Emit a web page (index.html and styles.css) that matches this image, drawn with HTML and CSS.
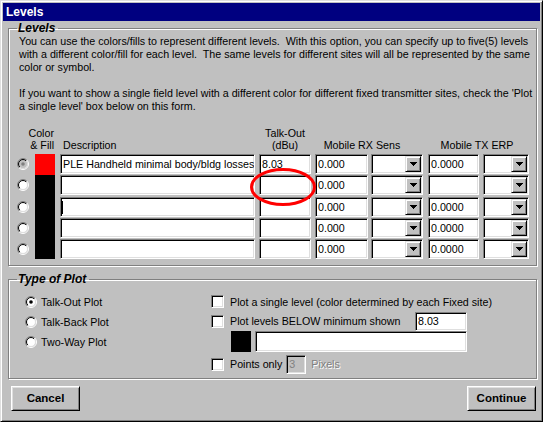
FILE: index.html
```html
<!DOCTYPE html>
<html>
<head>
<meta charset="utf-8">
<title>Levels</title>
<link rel="stylesheet" href="styles.css">
</head>
<body>
<div class="window">
  <svg class="defs" width="0" height="0" aria-hidden="true">
    <defs>
      <linearGradient id="rOuter" x1="0" y1="0" x2="1" y2="1">
        <stop offset="0.5" stop-color="#808080"/><stop offset="0.5" stop-color="#ffffff"/>
      </linearGradient>
      <linearGradient id="rInner" x1="0" y1="0" x2="1" y2="1">
        <stop offset="0.5" stop-color="#000000"/><stop offset="0.5" stop-color="#dfdfdf"/>
      </linearGradient>
    </defs>
  </svg>
  <div class="titlebar">Levels</div>
  <div class="body">
    <fieldset class="group group-levels">
      <legend>Levels</legend>
      <p class="intro">You can use the colors/fills to represent different levels.&nbsp; With this option, you can specify up to five(5) levels<br>with a different color/fill for each level.&nbsp; The same levels for different sites will all be represented by the same<br>color or symbol.</p>
      <p class="intro">If you want to show a single field level with a different color for different fixed transmitter sites, check the 'Plot<br>a single level' box below on this form.</p>
      <div class="grid">
        <div class="hdr hdr-color">Color<br>&amp; Fill</div>
        <div class="hdr hdr-desc">Description</div>
        <div class="hdr hdr-talk">Talk-Out<br>(dBu)</div>
        <div class="hdr hdr-rx">Mobile RX Sens</div>
        <div class="hdr hdr-tx">Mobile TX ERP</div>

        <svg class="radio" width="12" height="12" viewBox="0 0 12 12"><circle cx="6" cy="6" r="5.5" fill="none" stroke="url(#rOuter)"/><circle cx="6" cy="6" r="4.5" fill="#c0c0c0" stroke="url(#rInner)"/><circle cx="6" cy="6" r="1.8" fill="#808080"/></svg>
        <div class="swatch red"></div>
        <div class="field w-desc">PLE Handheld minimal body/bldg losses</div>
        <div class="field w-talk">8.03</div>
        <div class="field w-rx">0.000</div>
        <div class="field combo w-rxdd"><span class="dbtn"><svg width="7" height="4" viewBox="0 0 7 4"><path d="M0 0h7v1h-1v1h-1v1h-1v1h-1v-1h-1v-1h-1v-1h-1z"/></svg></span></div>
        <div class="field w-tx">0.0000</div>
        <div class="field combo w-txdd"><span class="dbtn"><svg width="7" height="4" viewBox="0 0 7 4"><path d="M0 0h7v1h-1v1h-1v1h-1v1h-1v-1h-1v-1h-1v-1h-1z"/></svg></span></div>

        <svg class="radio" width="12" height="12" viewBox="0 0 12 12"><circle cx="6" cy="6" r="5.5" fill="none" stroke="url(#rOuter)"/><circle cx="6" cy="6" r="4.5" fill="#fff" stroke="url(#rInner)"/></svg>
        <div class="swatch"></div>
        <div class="field w-desc"></div>
        <div class="field w-talk"></div>
        <div class="field w-rx">0.000</div>
        <div class="field combo w-rxdd"><span class="dbtn"><svg width="7" height="4" viewBox="0 0 7 4"><path d="M0 0h7v1h-1v1h-1v1h-1v1h-1v-1h-1v-1h-1v-1h-1z"/></svg></span></div>
        <div class="field w-tx"></div>
        <div class="field combo w-txdd"><span class="dbtn"><svg width="7" height="4" viewBox="0 0 7 4"><path d="M0 0h7v1h-1v1h-1v1h-1v1h-1v-1h-1v-1h-1v-1h-1z"/></svg></span></div>

        <svg class="radio" width="12" height="12" viewBox="0 0 12 12"><circle cx="6" cy="6" r="5.5" fill="none" stroke="url(#rOuter)"/><circle cx="6" cy="6" r="4.5" fill="#fff" stroke="url(#rInner)"/></svg>
        <div class="swatch"></div>
        <div class="field w-desc"><span class="caret"></span></div>
        <div class="field w-talk"></div>
        <div class="field w-rx">0.000</div>
        <div class="field combo w-rxdd"><span class="dbtn"><svg width="7" height="4" viewBox="0 0 7 4"><path d="M0 0h7v1h-1v1h-1v1h-1v1h-1v-1h-1v-1h-1v-1h-1z"/></svg></span></div>
        <div class="field w-tx">0.0000</div>
        <div class="field combo w-txdd"><span class="dbtn"><svg width="7" height="4" viewBox="0 0 7 4"><path d="M0 0h7v1h-1v1h-1v1h-1v1h-1v-1h-1v-1h-1v-1h-1z"/></svg></span></div>

        <svg class="radio" width="12" height="12" viewBox="0 0 12 12"><circle cx="6" cy="6" r="5.5" fill="none" stroke="url(#rOuter)"/><circle cx="6" cy="6" r="4.5" fill="#fff" stroke="url(#rInner)"/></svg>
        <div class="swatch"></div>
        <div class="field w-desc"></div>
        <div class="field w-talk"></div>
        <div class="field w-rx">0.000</div>
        <div class="field combo w-rxdd"><span class="dbtn"><svg width="7" height="4" viewBox="0 0 7 4"><path d="M0 0h7v1h-1v1h-1v1h-1v1h-1v-1h-1v-1h-1v-1h-1z"/></svg></span></div>
        <div class="field w-tx">0.0000</div>
        <div class="field combo w-txdd"><span class="dbtn"><svg width="7" height="4" viewBox="0 0 7 4"><path d="M0 0h7v1h-1v1h-1v1h-1v1h-1v-1h-1v-1h-1v-1h-1z"/></svg></span></div>

        <svg class="radio" width="12" height="12" viewBox="0 0 12 12"><circle cx="6" cy="6" r="5.5" fill="none" stroke="url(#rOuter)"/><circle cx="6" cy="6" r="4.5" fill="#fff" stroke="url(#rInner)"/></svg>
        <div class="swatch last"></div>
        <div class="field w-desc"></div>
        <div class="field w-talk"></div>
        <div class="field w-rx">0.000</div>
        <div class="field combo w-rxdd"><span class="dbtn"><svg width="7" height="4" viewBox="0 0 7 4"><path d="M0 0h7v1h-1v1h-1v1h-1v1h-1v-1h-1v-1h-1v-1h-1z"/></svg></span></div>
        <div class="field w-tx">0.0000</div>
        <div class="field combo w-txdd"><span class="dbtn"><svg width="7" height="4" viewBox="0 0 7 4"><path d="M0 0h7v1h-1v1h-1v1h-1v1h-1v-1h-1v-1h-1v-1h-1z"/></svg></span></div>
      </div>
    </fieldset>

    <fieldset class="group group-plot">
      <legend>Type of Plot</legend>
      <div class="plot">
        <div class="plot-left">
          <div class="opt"><svg class="radio" width="12" height="12" viewBox="0 0 12 12"><circle cx="6" cy="6" r="5.5" fill="none" stroke="url(#rOuter)"/><circle cx="6" cy="6" r="4.5" fill="#fff" stroke="url(#rInner)"/><circle cx="6" cy="6" r="1.8" fill="#000"/></svg><span>Talk-Out Plot</span></div>
          <div class="opt"><svg class="radio" width="12" height="12" viewBox="0 0 12 12"><circle cx="6" cy="6" r="5.5" fill="none" stroke="url(#rOuter)"/><circle cx="6" cy="6" r="4.5" fill="#fff" stroke="url(#rInner)"/></svg><span>Talk-Back Plot</span></div>
          <div class="opt"><svg class="radio" width="12" height="12" viewBox="0 0 12 12"><circle cx="6" cy="6" r="5.5" fill="none" stroke="url(#rOuter)"/><circle cx="6" cy="6" r="4.5" fill="#fff" stroke="url(#rInner)"/></svg><span>Two-Way Plot</span></div>
        </div>
        <div class="plot-right">
          <div class="chkrow r1"><span class="chk"></span><span>Plot a single level (color determined by each Fixed site)</span></div>
          <div class="chkrow r2"><span class="chk"></span><span>Plot levels BELOW minimum shown</span><div class="field f-min">8.03</div></div>
          <div class="swrow"><span class="swatch small"></span><div class="field f-long"></div></div>
          <div class="chkrow r4"><span class="chk"></span><span>Points only</span><div class="field disabled f-px">3</div><span class="distext">Pixels</span></div>
        </div>
      </div>
    </fieldset>

    <div class="buttons">
      <div class="btn">Cancel</div>
      <div class="btn">Continue</div>
    </div>
  </div>

  <svg class="mark" width="66" height="38" viewBox="0 0 66 38"><ellipse cx="33" cy="19" rx="31.5" ry="17.5" fill="none" stroke="#ff0000" stroke-width="3"/></svg>
</div>
</body>
</html>
```

FILE: styles.css
```css
* { box-sizing: border-box; }
html, body { margin: 0; padding: 0; }
body {
  width: 543px;
  height: 422px;
  overflow: hidden;
  background: #c0c0c0;
  font-family: "Liberation Sans", Arial, sans-serif;
  font-size: 10.7px;
  color: #000;
}
.window {
  position: relative;
  width: 543px;
  height: 422px;
  background: #c0c0c0;
  border: 1px solid;
  border-color: #dfdfdf #000 #000 #dfdfdf;
  box-shadow: inset 1px 1px 0 #fff, inset -1px -1px 0 #808080;
  padding: 2px;
  display: flex;
  flex-direction: column;
}
.defs { display: block; width: 0; height: 0; }
.titlebar {
  height: 18px;
  background: #000080;
  color: #fff;
  font-weight: bold;
  font-size: 12px;
  line-height: 18px;
  padding-left: 3px;
}
.body {
  padding: 1px 3px 0 5px;
  display: flex;
  flex-direction: column;
}
.group {
  margin: 0;
  min-width: 0;
  border: 1px solid #808080;
  box-shadow: inset 1px 1px 0 #fff, 1px 1px 0 #fff;
}
.group legend {
  font-weight: bold;
  font-style: italic;
  font-size: 12px;
  line-height: 13px;
  padding: 0 3px 0 1px;
}
.group-levels { padding: 0 7px 4px 8px; }
.intro {
  margin: 0 0 13px 2px;
  line-height: 13px;
  white-space: nowrap;
}
.grid {
  display: grid;
  grid-template-columns: 18px 20px 200px 56px 57px 55px 56px 50px;
  grid-template-rows: 28px repeat(5, 21.33px);
}
.hdr {
  grid-row: 1;
  align-self: end;
  line-height: 12px;
  padding-bottom: 3px;
  white-space: nowrap;
}
.hdr-color { grid-column: 1 / 3; text-align: right; padding-right: 1px; }
.hdr-desc { grid-column: 3; padding-left: 8px; }
.hdr-talk { grid-column: 4; text-align: center; padding-left: 4px; }
.hdr-rx { grid-column: 5 / 7; text-align: center; padding-right: 10px; }
.hdr-tx { grid-column: 7 / 9; text-align: center; padding-left: 2px; }

.radio { display: block; }
.grid .radio { align-self: start; margin-top: 4px; }
.swatch { background: #000; width: 20px; height: 21.33px; }
.swatch.red { background: #ff0000; }
.swatch.last { height: 20px; }

.field {
  height: 20px;
  background: #fff;
  border: 1px solid;
  border-color: #808080 #fff #fff #808080;
  box-shadow: inset 1px 1px 0 #000, inset -1px -1px 0 #dfdfdf;
  padding: 0 2px;
  line-height: 18px;
  white-space: nowrap;
  overflow: hidden;
  justify-self: end;
}
.w-desc { width: 195px; }
.w-talk { width: 52px; }
.w-rx { width: 53px; }
.w-rxdd { width: 52px; }
.w-tx { width: 51px; }
.w-txdd { width: 46px; }
.combo {
  display: flex;
  justify-content: flex-end;
  padding: 1px;
}
.dbtn {
  width: 16px;
  height: 16px;
  background: #c0c0c0;
  border: 1px solid;
  border-color: #dfdfdf #000 #000 #dfdfdf;
  box-shadow: inset 1px 1px 0 #fff, inset -1px -1px 0 #808080;
  display: flex;
  align-items: center;
  justify-content: center;
}
.dbtn svg { display: block; shape-rendering: crispEdges; }
.caret {
  display: inline-block;
  width: 1px;
  height: 13px;
  background: #000;
    vertical-align: middle;
  margin-left: -1px;
}

.group-plot {
  margin-top: 7px;
  padding: 6px 7px 3px 8px;
}
.plot { display: flex; }
.plot-left {
  width: 194px;
  padding-left: 8px;
  display: flex;
  flex-direction: column;
}
.opt {
  height: 20px;
  display: flex;
  align-items: center;
  gap: 4px;
}
.plot-right {
  width: 256px;
  display: flex;
  flex-direction: column;
}
.chkrow {
  display: flex;
  align-items: center;
  white-space: nowrap;
}
.r1 { height: 20px; }
.r2 { height: 19px; }
.r4 { height: 21px; margin-top: 2px; }
.chk {
  width: 13px;
  height: 13px;
  margin-right: 6px;
  background: #fff;
  border: 1px solid;
  border-color: #808080 #fff #fff #808080;
  box-shadow: inset 1px 1px 0 #000, inset -1px -1px 0 #dfdfdf;
  flex: none;
}
.f-min { width: 52px; height: 19px; line-height: 17px; margin-left: auto; }
.swrow { display: flex; height: 21px; padding-left: 20px; gap: 4px; }
.swatch.small { width: 20px; height: 21px; }
.f-long { flex: 1; height: 21px; }
.f-px {
  width: 20px;
  height: 19px;
  line-height: 17px;
  margin-left: 4px;
  background: #c0c0c0;
  color: #808080;
  box-shadow: inset 1px 1px 0 #000, inset -1px -1px 0 #dfdfdf;
}
.distext {
  margin-left: 5px;
  color: #808080;
  text-shadow: 1px 1px 0 #fff;
}
.buttons {
  display: flex;
  justify-content: space-between;
  margin-top: 7px;
  padding: 0 1px 0 3px;
}
.btn {
  width: 69px;
  height: 25px;
  background: #c0c0c0;
  border: 1px solid;
  border-color: #fff #000 #000 #fff;
  box-shadow: inset 1px 1px 0 #dfdfdf, inset -1px -1px 0 #808080;
  display: flex;
  align-items: center;
  justify-content: center;
  font-weight: bold;
  font-size: 11.5px;
}
.mark {
  position: absolute;
  left: 249px;
  top: 167px;
  display: block;
}
```
